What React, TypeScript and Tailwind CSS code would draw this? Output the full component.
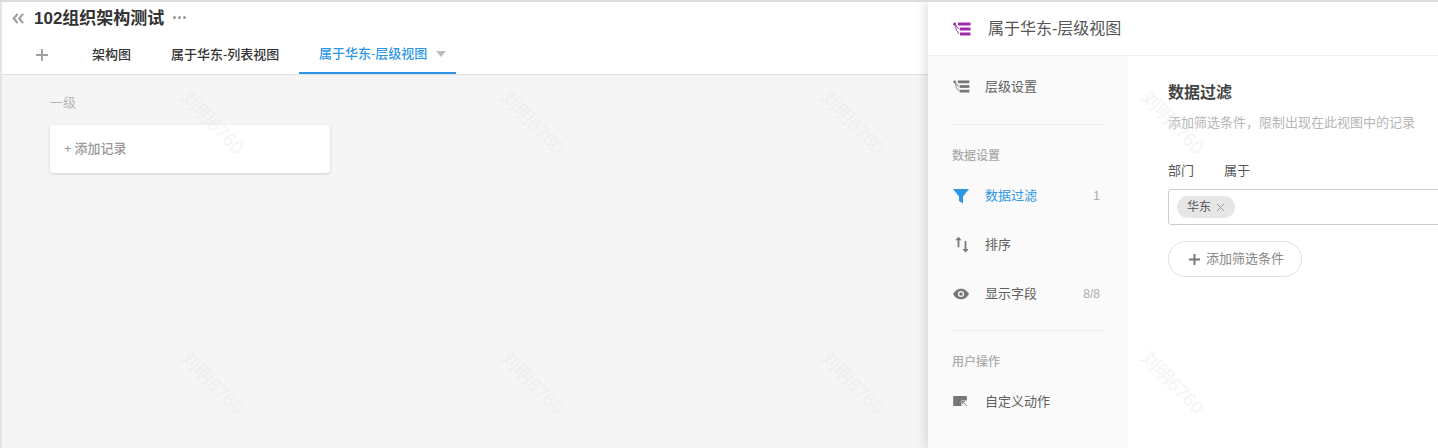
import React from "react";

const cjk = { fontFamily: '"Liberation Sans","Noto Sans CJK SC",sans-serif' };

function TreeIcon({ color, className }: { color: string; className?: string }) {
  return (
    <svg viewBox="0 0 18 14" className={className} fill="none">
      <circle cx="1.6" cy="2" r="1.5" fill={color} />
      <path d="M2 3 Q3 9 6 12 M2.5 2.5 Q3.5 6 6.5 7" stroke={color} strokeWidth="0.9" />
      <rect x="5" y="0.5" width="12.5" height="3" fill={color} />
      <rect x="7" y="5.5" width="10.5" height="3" fill={color} />
      <rect x="7" y="10.5" width="10.5" height="3" fill={color} />
    </svg>
  );
}

function Watermark({ className }: { className: string }) {
  return (
    <span
      className={`absolute z-20 rotate-[45deg] text-[19px] leading-none whitespace-nowrap text-[#e6e6e6] opacity-40 pointer-events-none ${className}`}
    >
      刘明6760
    </span>
  );
}

function NavItem({
  icon,
  label,
  count,
  active,
}: {
  icon: React.ReactNode;
  label: string;
  count?: string;
  active?: boolean;
}) {
  return (
    <div className="flex items-center h-[49px] pl-6 pr-7">
      <span className="w-[33px] pl-[1px] flex items-center">{icon}</span>
      <span className={`flex-1 text-[13px] ${active ? "text-[#2d97e6]" : "text-[#5f5f5f]"}`}>{label}</span>
      {count && <span className="text-[12px] text-[#aaa]">{count}</span>}
    </div>
  );
}

export default function App() {
  return (
    <div className="relative flex w-[1438px] h-[448px] overflow-hidden bg-white border-t-2 border-[#dcdcdc]" style={cjk}>
      <div className="flex flex-col w-[928px] border-l-2 border-[#e4e4e4]">
        <header className="h-[73px] bg-white border-b border-[#e0e0e0] flex flex-col">
          <div className="flex items-center h-[34px] pl-[10px]">
            <svg viewBox="0 0 14 12" className="w-[13px] h-[11px]" fill="none" stroke="#a0a0a0" strokeWidth="2.4">
              <path d="M6 1 L1.8 6 L6 11 M12 1 L7.8 6 L12 11" />
            </svg>
            <h1 className="ml-[9px] text-[17px] leading-[24px] font-bold text-[#333]">102组织架构测试</h1>
            <span className="ml-[9px] flex gap-[2px] pb-[2px]">
              <i className="w-[3px] h-[3px] rounded-full bg-[#999]" />
              <i className="w-[3px] h-[3px] rounded-full bg-[#999]" />
              <i className="w-[3px] h-[3px] rounded-full bg-[#999]" />
            </span>
          </div>
          <nav className="flex h-[39px] items-stretch">
            <span className="flex items-center pl-[34px] w-[90px]">
              <svg viewBox="0 0 12 12" className="w-[12px] h-[12px]" stroke="#9e9e9e" strokeWidth="1.8">
                <path d="M6 0 V12 M0 6 H12" />
              </svg>
            </span>
            <span className="flex items-center text-[13px] font-medium text-[#333] w-[79px] whitespace-nowrap">架构图</span>
            <span className="flex items-center text-[13px] font-medium text-[#333] w-[128px] whitespace-nowrap">属于华东-列表视图</span>
            <span className="flex items-center pl-5 w-[157px] border-b-2 border-[#2d97e6] text-[13px] font-medium text-[#2d97e6] whitespace-nowrap">
              属于华东-层级视图
              <i className="ml-[9px] w-0 h-0 border-x-[5px] border-x-transparent border-t-[6px] border-t-[#bbb]" />
            </span>
          </nav>
        </header>
        <main className="flex-1 bg-[#f5f5f5] pt-[18px] pl-[48px]">
          <p className="text-[13px] text-[#b5b5b5] leading-[20px]">一级</p>
          <button className="mt-[12px] flex items-center w-[280px] h-[48px] pl-[14px] bg-white rounded-[3px] shadow-[0_1px_3px_rgba(0,0,0,0.16)] text-[13px] text-[#999] font-medium">
            <span className="mr-[3px]">+</span>添加记录
          </button>
        </main>
      </div>

      <aside className="relative z-10 flex flex-col w-[510px] bg-white shadow-[-3px_0_10px_rgba(0,0,0,0.12)]">
        <div className="flex items-center h-[54px] pl-6 border-b border-[#f0f0f0]">
          <span className="pl-[1px] flex">
            <TreeIcon color="#a12cab" className="w-[18px] h-[14px]" />
          </span>
          <span className="ml-[17px] text-[16px] text-[#555]">属于华东-层级视图</span>
        </div>
        <div className="flex flex-1">
          <div className="w-[200px] bg-[#fafafa] pt-[6px]">
            <NavItem icon={<TreeIcon color="#777" className="w-[17px] h-[13px]" />} label="层级设置" />
            <div className="mx-6 mt-[13px] border-t border-[#eeeeee]" />
            <p className="mx-6 mt-[22px] text-[12px] font-medium text-[#aaa] leading-[18px]">数据设置</p>
            <div className="mt-[6px]">
              <NavItem
                active
                icon={
                  <svg viewBox="0 0 16 16" className="w-[16px] h-[16px]">
                    <path d="M0 1 H16 L10 8.5 V15.5 L6 13 V8.5 Z" fill="#2d97e6" />
                  </svg>
                }
                label="数据过滤"
                count="1"
              />
              <NavItem
                icon={
                  <svg viewBox="0 0 16 18" className="ml-[2px] w-[14px] h-[17px]" fill="#777">
                    <path d="M4 0 L7.5 4 H5 V12 H3 V4 H0.5 Z M11 5 H13 V14 H15.5 L12 18 L8.5 14 H11 Z" />
                  </svg>
                }
                label="排序"
              />
              <NavItem
                icon={
                  <svg viewBox="0 0 18 12" className="w-[16px] h-[12px]">
                    <path d="M0 6 C3 1 6 0 9 0 C12 0 15 1 18 6 C15 11 12 12 9 12 C6 12 3 11 0 6 Z" fill="#777" />
                    <circle cx="9" cy="6" r="3.4" fill="#fafafa" />
                    <circle cx="9" cy="6" r="2" fill="#777" />
                  </svg>
                }
                label="显示字段"
                count="8/8"
              />
            </div>
            <div className="mx-6 mt-[12px] border-t border-[#eeeeee]" />
            <p className="mx-6 mt-[22px] text-[12px] font-medium text-[#aaa] leading-[18px]">用户操作</p>
            <div className="mt-[6px]">
              <NavItem
                icon={
                  <svg viewBox="0 0 16 12" className="w-[15px] h-[11px]">
                    <path d="M1 0 H14 Q15 0 15 1 V5 H9 V11 H1 Q0 11 0 10 V1 Q0 0 1 0 Z" fill="#777" />
                    <path d="M10 6 H13 M10 6 V9 M10 6 L15 11" stroke="#777" strokeWidth="1" fill="none" />
                  </svg>
                }
                label="自定义动作"
              />
            </div>
          </div>
          <div className="flex-1 pl-10 pt-[25px] overflow-hidden">
            <h2 className="text-[16px] font-bold text-[#444] leading-[24px]">数据过滤</h2>
            <p className="mt-[9px] text-[13px] text-[#b5b5b5] leading-[18px]">添加筛选条件，限制出现在此视图中的记录</p>
            <div className="mt-[30px] flex text-[13px] text-[#555] leading-[18px]">
              <span className="w-[56px]">部门</span>
              <span>属于</span>
            </div>
            <div className="mt-[9px] w-[400px] h-[36px] flex items-center pl-[8px] border border-[#ccc] rounded-[3px]">
              <span className="flex items-center h-[22px] px-[10px] gap-[5px] rounded-full bg-[#e6e6e6] text-[12px] text-[#555]">
                华东
                <svg viewBox="0 0 10 10" className="w-[9px] h-[9px]" stroke="#999" strokeWidth="1.1">
                  <path d="M1 1 L9 9 M9 1 L1 9" />
                </svg>
              </span>
            </div>
            <button className="mt-[16px] flex items-center w-[134px] h-[36px] pl-[20px] gap-[6px] border border-[#e0e0e0] rounded-full text-[13px] text-[#888]">
              <svg viewBox="0 0 11 11" className="w-[11px] h-[11px]" stroke="#777" strokeWidth="1.9">
                <path d="M5.5 0 V11 M0 5.5 H11" />
              </svg>
              添加筛选条件
            </button>
          </div>
        </div>
      </aside>

      <Watermark className="left-[172px] top-[111px]" />
      <Watermark className="left-[492px] top-[111px]" />
      <Watermark className="left-[812px] top-[111px]" />
      <Watermark className="left-[1132px] top-[111px]" />
      <Watermark className="left-[172px] top-[371px]" />
      <Watermark className="left-[492px] top-[371px]" />
      <Watermark className="left-[812px] top-[371px]" />
      <Watermark className="left-[1132px] top-[371px]" />
    </div>
  );
}
